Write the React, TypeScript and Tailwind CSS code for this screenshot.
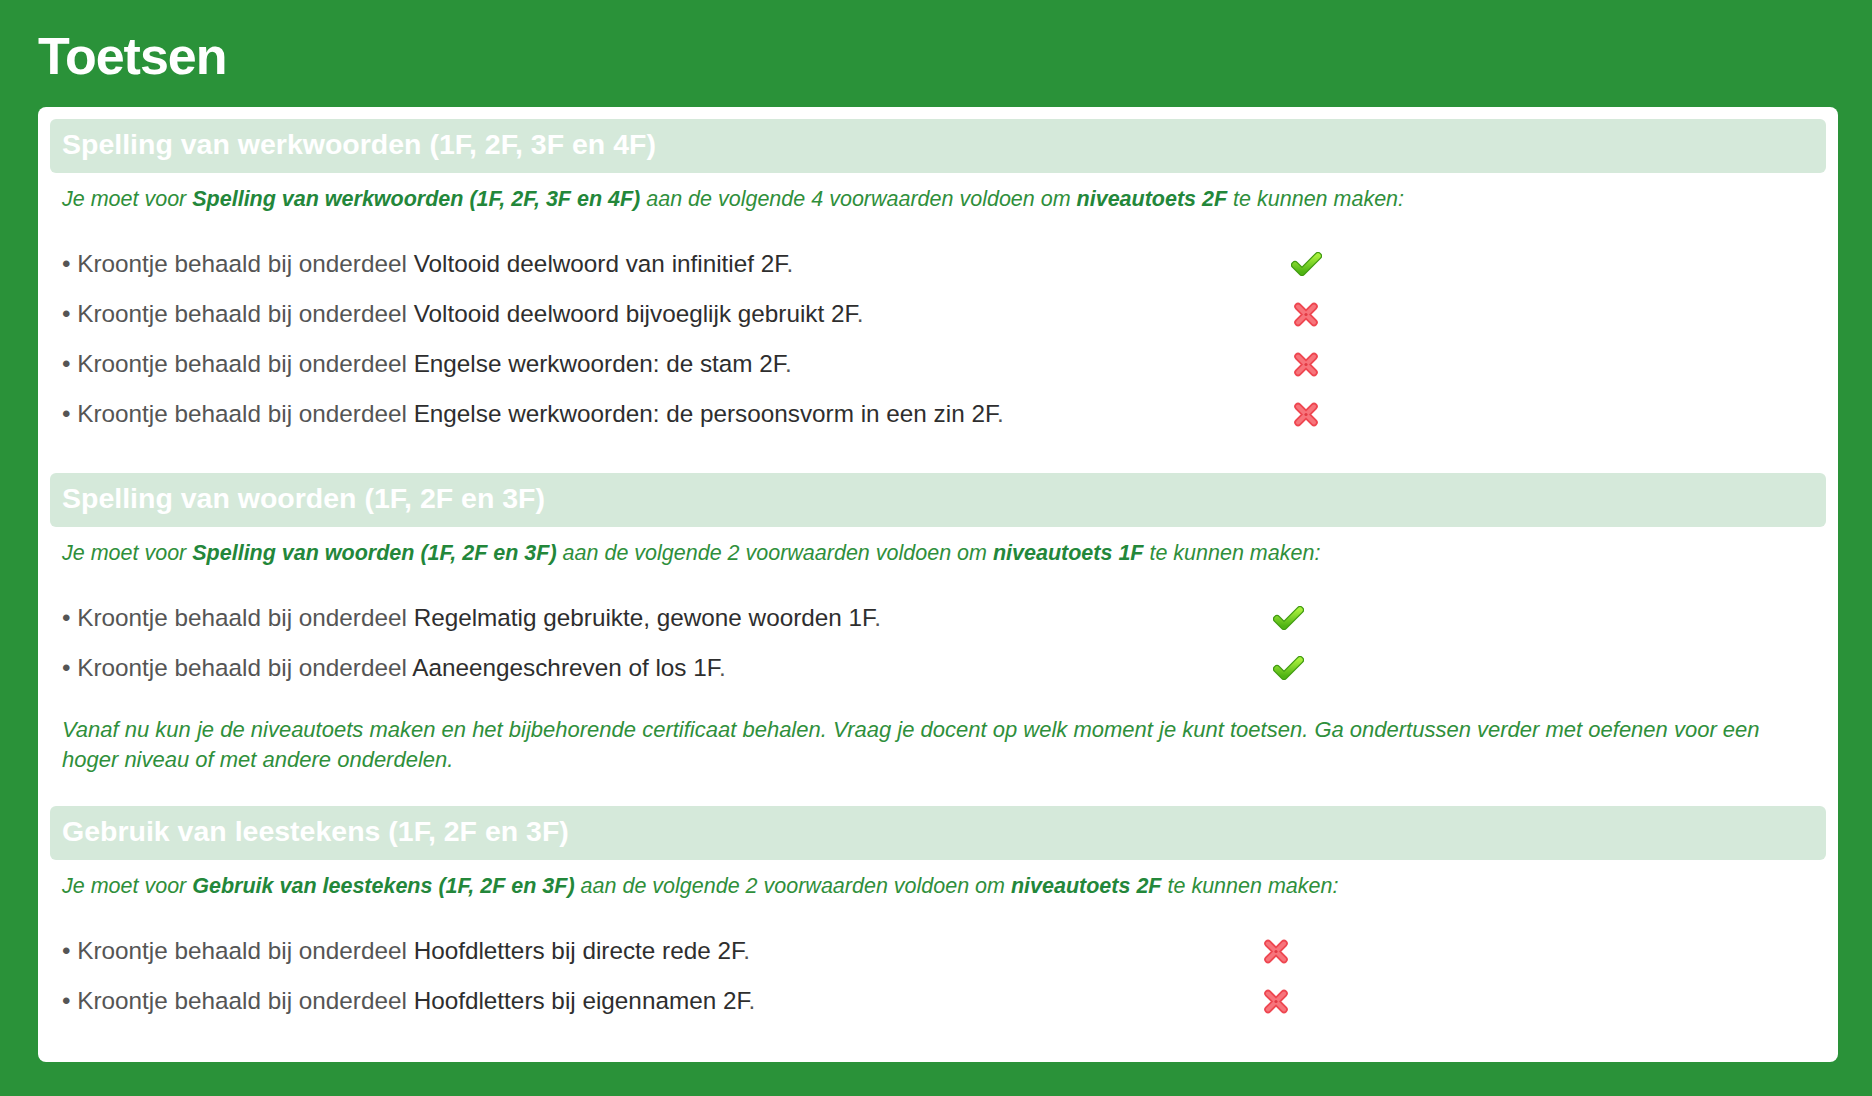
import React from "react";

type Req = { name: string; ok: boolean };

type Section = {
  title: string;
  level: string;
  reqs: Req[];
  cols: string;
  done?: boolean;
};

const sections: Section[] = [
  {
    title: "Spelling van werkwoorden (1F, 2F, 3F en 4F)",
    level: "niveautoets 2F",
    cols: "grid-cols-[1224px_40px]",
    reqs: [
      { name: "Voltooid deelwoord van infinitief 2F", ok: true },
      { name: "Voltooid deelwoord bijvoeglijk gebruikt 2F", ok: false },
      { name: "Engelse werkwoorden: de stam 2F", ok: false },
      { name: "Engelse werkwoorden: de persoonsvorm in een zin 2F", ok: false },
    ],
  },
  {
    title: "Spelling van woorden (1F, 2F en 3F)",
    level: "niveautoets 1F",
    cols: "grid-cols-[1206px_40px]",
    done: true,
    reqs: [
      { name: "Regelmatig gebruikte, gewone woorden 1F", ok: true },
      { name: "Aaneengeschreven of los 1F", ok: true },
    ],
  },
  {
    title: "Gebruik van leestekens (1F, 2F en 3F)",
    level: "niveautoets 2F",
    cols: "grid-cols-[1194px_40px]",
    reqs: [
      { name: "Hoofdletters bij directe rede 2F", ok: false },
      { name: "Hoofdletters bij eigennamen 2F", ok: false },
    ],
  },
];

const Check = () => (
  <svg width="31" height="24" viewBox="0 0 31 24">
    <defs>
      <linearGradient id="chk" x1="0" y1="0" x2="0" y2="1">
        <stop offset="0" stopColor="#a6ee3c" />
        <stop offset="1" stopColor="#4fb313" />
      </linearGradient>
    </defs>
    <path
      d="M4 13 L11 20 L27 4"
      fill="none"
      stroke="#3f9a10"
      strokeWidth="8"
      strokeLinecap="round"
      strokeLinejoin="round"
    />
    <path
      d="M4 13 L11 20 L27 4"
      fill="none"
      stroke="url(#chk)"
      strokeWidth="5.5"
      strokeLinecap="round"
      strokeLinejoin="round"
    />
  </svg>
);

const Cross = () => (
  <svg width="26" height="25" viewBox="0 0 26 25">
    <path
      d="M5 4.5 L21 20.5 M21 4.5 L5 20.5"
      stroke="#ee4650"
      strokeWidth="7.5"
      strokeLinecap="round"
    />
    <path
      d="M5 4.5 L21 20.5 M21 4.5 L5 20.5"
      stroke="#f7747b"
      strokeWidth="4"
      strokeLinecap="round"
    />
    <circle cx="13" cy="12.5" r="1.6" fill="#e23a44" />
  </svg>
);

const SectionBlock = ({ s }: { s: Section }) => (
  <div className={s.done ? "pb-[19px]" : "pb-[22px]"}>
    <div className="flex h-[54px] items-center rounded-[6px] bg-[#d5e9da] px-[12px] pb-[3px] text-[28.5px] font-bold text-white">
      {s.title}
    </div>
    <p className="mt-[11px] pl-[12px] text-[21.5px] italic leading-[30px] text-[#2f8f3b]">
      Je moet voor <span className="font-bold text-[#23873a]">{s.title}</span> aan de volgende{" "}
      {s.reqs.length} voorwaarden voldoen om{" "}
      <span className="font-bold text-[#23873a]">{s.level}</span> te kunnen maken:
    </p>
    <div className="mt-[25px] flex flex-col">
      {s.reqs.map((r) => (
        <div key={r.name} className={`grid h-[50px] items-center pl-[12px] ${s.cols}`}>
          <div className="text-[24.3px] text-[#555]">
            • Kroontje behaald bij onderdeel <span className="text-[#2e2e2e]">{r.name}</span>.
          </div>
          <div className="flex justify-center">{r.ok ? <Check /> : <Cross />}</div>
        </div>
      ))}
    </div>
    {s.done && (
      <p className="mt-[22px] pl-[12px] text-[22px] italic leading-[30px] text-[#2f8f3b]">
        Vanaf nu kun je de niveautoets maken en het bijbehorende certificaat behalen. Vraag je docent op welk
        moment je kunt toetsen. Ga ondertussen verder met oefenen voor een
        <br />
        hoger niveau of met andere onderdelen.
      </p>
    )}
  </div>
);

export default function App() {
  return (
    <div className="min-h-screen bg-[#2a9239] pb-[35px] pl-[38px] pr-[34px] pt-[30px] font-['Liberation_Sans',Arial,sans-serif]">
      <h1 className="mb-[25px] text-[52px] font-bold leading-[52px] tracking-[-1px] text-white">Toetsen</h1>
      <div className="flex flex-col gap-[12px] rounded-[8px] bg-white px-[12px] pb-[14px] pt-[12px]">
        {sections.map((s) => (
          <SectionBlock key={s.title} s={s} />
        ))}
      </div>
    </div>
  );
}
